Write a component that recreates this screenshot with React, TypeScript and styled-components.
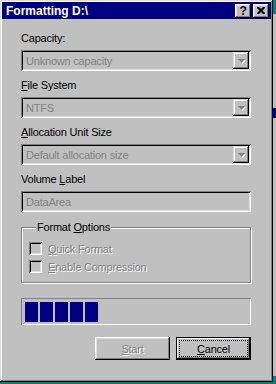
import styled, { createGlobalStyle } from 'styled-components'

const GlobalStyle = createGlobalStyle`
  html, body {
    margin: 0;
    padding: 0;
    background: #008080;
    font-family: "Liberation Sans", Arial, sans-serif;
    font-size: 11px;
    letter-spacing: -0.2px;
  }
`

// desktop behind the dialog
const Desktop = styled.div`
  position: relative;
  width: 276px;
  height: 384px;
  overflow: hidden;
`

const BackWindow = styled.div`
  position: absolute;
  left: 273px;
  top: 14px;
  width: 20px;
  height: 362px;
  background: #c0c0c0;
`

const BackTitle = styled.div`
  margin-top: 94px;
  height: 10px;
  background: #000080;
`

const Window = styled.div`
  position: relative;
  box-sizing: border-box;
  width: 273px;
  height: 382px;
  padding: 2px;
  background: #c0c0c0;
  box-shadow: inset -1px -1px 0 #000, inset 1px 1px 0 #dfdfdf,
    inset -2px -2px 0 #808080, inset 2px 2px 0 #fff;
`

const TitleBar = styled.div`
  display: flex;
  align-items: center;
  height: 17px;
  padding: 0 2px 0 4px;
  background: #000080;
`

const TitleText = styled.div`
  flex: 1;
  color: #fff;
  font-weight: bold;
  font-size: 12px;
  letter-spacing: 0;
  padding-top: 1px;
`

const TitleButton = styled.div<{ $gap?: number }>`
  box-sizing: border-box;
  display: flex;
  align-items: center;
  justify-content: center;
  width: 16px;
  height: 14px;
  margin-left: ${p => p.$gap ?? 0}px;
  background: #c0c0c0;
  font-weight: bold;
  font-size: 12px;
  color: #000;
  box-shadow: inset -1px -1px 0 #000, inset 1px 1px 0 #fff,
    inset -2px -2px 0 #808080, inset 2px 2px 0 #dfdfdf;
`

const Form = styled.div`
  display: flex;
  flex-direction: column;
  width: 230px;
  padding: 13px 0 0 19px;
`

const Field = styled.div`
  display: flex;
  flex-direction: column;
  margin-bottom: 8px;
`

const Label = styled.div`
  height: 13px;
  line-height: 13px;
  margin-bottom: 5px;
  color: #000;
`

const Key = styled.span`
  text-decoration: underline;
  text-underline-offset: 1px;
`

const Sunken = styled.div`
  box-sizing: border-box;
  display: flex;
  align-items: center;
  height: 21px;
  padding: 2px;
  background: #c0c0c0;
  box-shadow: inset 1px 1px 0 #808080, inset -1px -1px 0 #fff,
    inset 2px 2px 0 #000, inset -2px -2px 0 #dfdfdf;
`

const Value = styled.div`
  flex: 1;
  padding-left: 3px;
  color: #808080;
  white-space: nowrap;
`

const DropButton = styled.div`
  box-sizing: border-box;
  display: flex;
  align-items: center;
  justify-content: center;
  width: 16px;
  height: 17px;
  background: #c0c0c0;
  box-shadow: inset -1px -1px 0 #000, inset 1px 1px 0 #dfdfdf,
    inset -2px -2px 0 #808080, inset 2px 2px 0 #fff;
`

const Group = styled.fieldset`
  margin: 1px 0 0;
  padding: 8px 0 0 7px;
  border: 1px solid #808080;
  box-shadow: inset 1px 1px 0 #fff, 1px 1px 0 #fff;
  height: 62px;
  box-sizing: border-box;
`

const Legend = styled.legend`
  padding: 0 1px;
  margin-left: 7px;
  background: #c0c0c0;
  line-height: 13px;
`

const CheckRow = styled.div`
  display: flex;
  align-items: center;
  height: 13px;
  margin-bottom: 5px;
`

const CheckBox = styled.div`
  width: 13px;
  height: 13px;
  margin-right: 6px;
  box-sizing: border-box;
  background: #c0c0c0;
  box-shadow: inset 1px 1px 0 #808080, inset -1px -1px 0 #fff,
    inset 2px 2px 0 #000, inset -2px -2px 0 #dfdfdf;
`

const Disabled = styled.span`
  color: #808080;
  text-shadow: 1px 1px 0 #fff;
`

const Progress = styled.div`
  box-sizing: border-box;
  display: flex;
  gap: 2px;
  height: 27px;
  margin-top: 15px;
  padding: 4px 3px 3px 4px;
  box-shadow: inset 1px 1px 0 #808080, inset -1px -1px 0 #fff;
`

const Block = styled.div`
  width: 13px;
  background: #000080;
`

const Buttons = styled.div`
  display: flex;
  justify-content: flex-end;
  gap: 6px;
  margin-top: 12px;
`

const Button = styled.div<{ $default?: boolean }>`
  box-sizing: border-box;
  display: flex;
  width: 75px;
  height: 23px;
  padding: 3px;
  background: #c0c0c0;
  box-shadow: ${p =>
    p.$default
      ? 'inset 0 0 0 1px #000, inset -2px -2px 0 #000, inset 2px 2px 0 #fff, inset -3px -3px 0 #808080'
      : 'inset -1px -1px 0 #000, inset 1px 1px 0 #fff, inset -2px -2px 0 #808080, inset 2px 2px 0 #dfdfdf'};
`

const Caption = styled.div<{ $focus?: boolean }>`
  flex: 1;
  display: flex;
  align-items: center;
  justify-content: center;
  border: 1px dotted ${p => (p.$focus ? '#000' : 'transparent')};
  color: #000;
`

const Arrow = () => (
  <svg width="9" height="6" viewBox="0 0 9 6">
    <path d="M2 2h7l-3.5 4z" fill="#fff" />
    <path d="M1 1h7l-3.5 4z" fill="#808080" />
  </svg>
)

const Combo = ({ value }: { value: string }) => (
  <Sunken>
    <Value>{value}</Value>
    <DropButton>
      <Arrow />
    </DropButton>
  </Sunken>
)

export default function App() {
  return (
    <Desktop>
      <GlobalStyle />
      <BackWindow>
        <BackTitle />
      </BackWindow>
      <Window>
        <TitleBar>
          <TitleText>Formatting D:\</TitleText>
          <TitleButton>?</TitleButton>
          <TitleButton $gap={2}>
            <svg width="8" height="7" viewBox="0 0 8 7">
              <path d="M0 0h2l2 2 2-2h2v1l-2.5 2.5L8 6v1H6L4 5 2 7H0V6l2.5-2.5L0 1z" fill="#000" />
            </svg>
          </TitleButton>
        </TitleBar>
        <Form>
          <Field>
            <Label>Capacity:</Label>
            <Combo value="Unknown capacity" />
          </Field>
          <Field>
            <Label><Key>F</Key>ile System</Label>
            <Combo value="NTFS" />
          </Field>
          <Field>
            <Label><Key>A</Key>llocation Unit Size</Label>
            <Combo value="Default allocation size" />
          </Field>
          <Field>
            <Label>Volume <Key>L</Key>abel</Label>
            <Sunken>
              <Value>DataArea</Value>
            </Sunken>
          </Field>
          <Group>
            <Legend>Format <Key>O</Key>ptions</Legend>
            <CheckRow>
              <CheckBox />
              <Disabled><Key>Q</Key>uick Format</Disabled>
            </CheckRow>
            <CheckRow>
              <CheckBox />
              <Disabled><Key>E</Key>nable Compression</Disabled>
            </CheckRow>
          </Group>
          <Progress>
            {[0, 1, 2, 3, 4].map(i => (
              <Block key={i} />
            ))}
          </Progress>
          <Buttons>
            <Button>
              <Caption>
                <Disabled><Key>S</Key>tart</Disabled>
              </Caption>
            </Button>
            <Button $default>
              <Caption $focus>
                <span><Key>C</Key>ancel</span>
              </Caption>
            </Button>
          </Buttons>
        </Form>
      </Window>
    </Desktop>
  )
}
